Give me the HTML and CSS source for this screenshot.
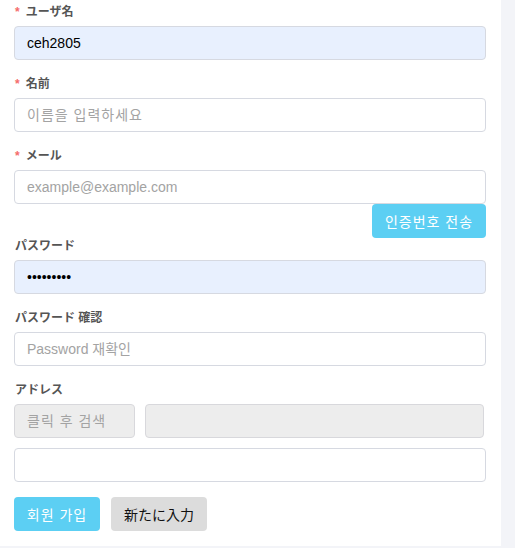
FILE: index.html
```html
<!DOCTYPE html>
<html lang="ko">
<head>
    <meta charset="utf-8">
    <title>会員登録</title>
    <link rel="stylesheet" href="styles.css">
</head>
<body>
    <div class="card">
        <form class="join-form">
            <div class="field">
                <label class="field-label" for="userId"><span class="req">*</span>ユーザ名</label>
                <input class="text-input autofill" type="text" id="userId" value="ceh2805">
            </div>
            <div class="field">
                <label class="field-label" for="userName"><span class="req">*</span>名前</label>
                <input class="text-input ko" type="text" id="userName" placeholder="이름을 입력하세요">
            </div>
            <div class="field field-mail">
                <label class="field-label" for="email"><span class="req">*</span>メール</label>
                <input class="text-input" type="text" id="email" placeholder="example@example.com">
                <div class="mail-actions">
                    <button type="button" class="btn btn-primary ko">인증번호 전송</button>
                </div>
            </div>
            <div class="field">
                <label class="field-label" for="pw">パスワード</label>
                <input class="text-input autofill" type="password" id="pw" value="123456789">
            </div>
            <div class="field">
                <label class="field-label" for="pwCheck">パスワード 確認</label>
                <input class="text-input" type="password" id="pwCheck" placeholder="Password 재확인">
            </div>
            <div class="field">
                <label class="field-label" for="zip">アドレス</label>
                <div class="addr-row">
                    <input class="text-input readonly zip ko" type="text" id="zip" placeholder="클릭 후 검색" readonly>
                    <input class="text-input readonly addr" type="text" readonly>
                </div>
                <input class="text-input detail" type="text">
            </div>
            <div class="form-actions">
                <button type="submit" class="btn btn-primary ko">회원 가입</button>
                <button type="reset" class="btn btn-reset">新たに入力</button>
            </div>
        </form>
    </div>
</body>
</html>
```

FILE: styles.css
```css
body {
    margin: 0;
    padding: 0;
    background-color: #f3f4f8;
    font-family: "Liberation Sans", Arial, "Noto Sans CJK KR", sans-serif;
    font-size: 14px;
    color: #333;
}

.card {
    width: 501px;
    box-sizing: border-box;
    background-color: #fff;
    padding: 2px 15px 15px 14px;
}

.field {
    margin-bottom: 14px;
}

.field-label {
    display: block;
    height: 18px;
    line-height: 18px;
    margin-bottom: 6px;
    padding-left: 1px;
    font-family: "Noto Sans CJK JP", sans-serif;
    font-size: 12px;
    font-weight: bold;
    color: #555;
}

.req {
    color: #f56c6c;
    font-family: "Liberation Sans", sans-serif;
    margin-right: 6px;
}

.text-input {
    display: block;
    width: 100%;
    height: 34px;
    box-sizing: border-box;
    padding: 0 12px;
    border: 1px solid #d6d9e1;
    border-radius: 4px;
    background-color: #fff;
    font-family: "Liberation Sans", Arial, "Noto Sans CJK KR", sans-serif;
    font-size: 14px;
    color: #222;
    outline: none;
}

.text-input::placeholder {
    color: #a3a3a3;
}

/* hangul runs a bit wider in the original font */
.ko,
.ko::placeholder {
    letter-spacing: 1px;
}

.autofill {
    background-color: #e8f0fe;
    color: #000;
}

.field-mail {
    margin-bottom: -2px;
}

.mail-actions {
    display: flex;
    justify-content: flex-end;
}

.addr-row {
    display: flex;
    gap: 10px;
    margin-bottom: 10px;
    padding-right: 2px;
}

.readonly {
    background-color: #ededed;
    border-color: #d8d8dc;
}

.zip {
    width: 121px;
    flex: none;
}

.addr {
    flex: 1;
}

.form-actions {
    display: flex;
    gap: 11px;
    margin-top: 15px;
}

.btn {
    height: 34px;
    border: none;
    border-radius: 4px;
    font-family: "Liberation Sans", Arial, "Noto Sans CJK KR", sans-serif;
    font-size: 14px;
    cursor: pointer;
    padding: 0 8px;
}

.btn-primary {
    background-color: #5ccff3;
    color: #fff;
}

.mail-actions .btn-primary {
    width: 114px;
}

.form-actions .btn-primary {
    width: 86px;
}

.btn-reset {
    width: 96px;
    background-color: #dcdcdc;
    color: #111;
    font-family: "Noto Sans CJK JP", sans-serif;
}
```
